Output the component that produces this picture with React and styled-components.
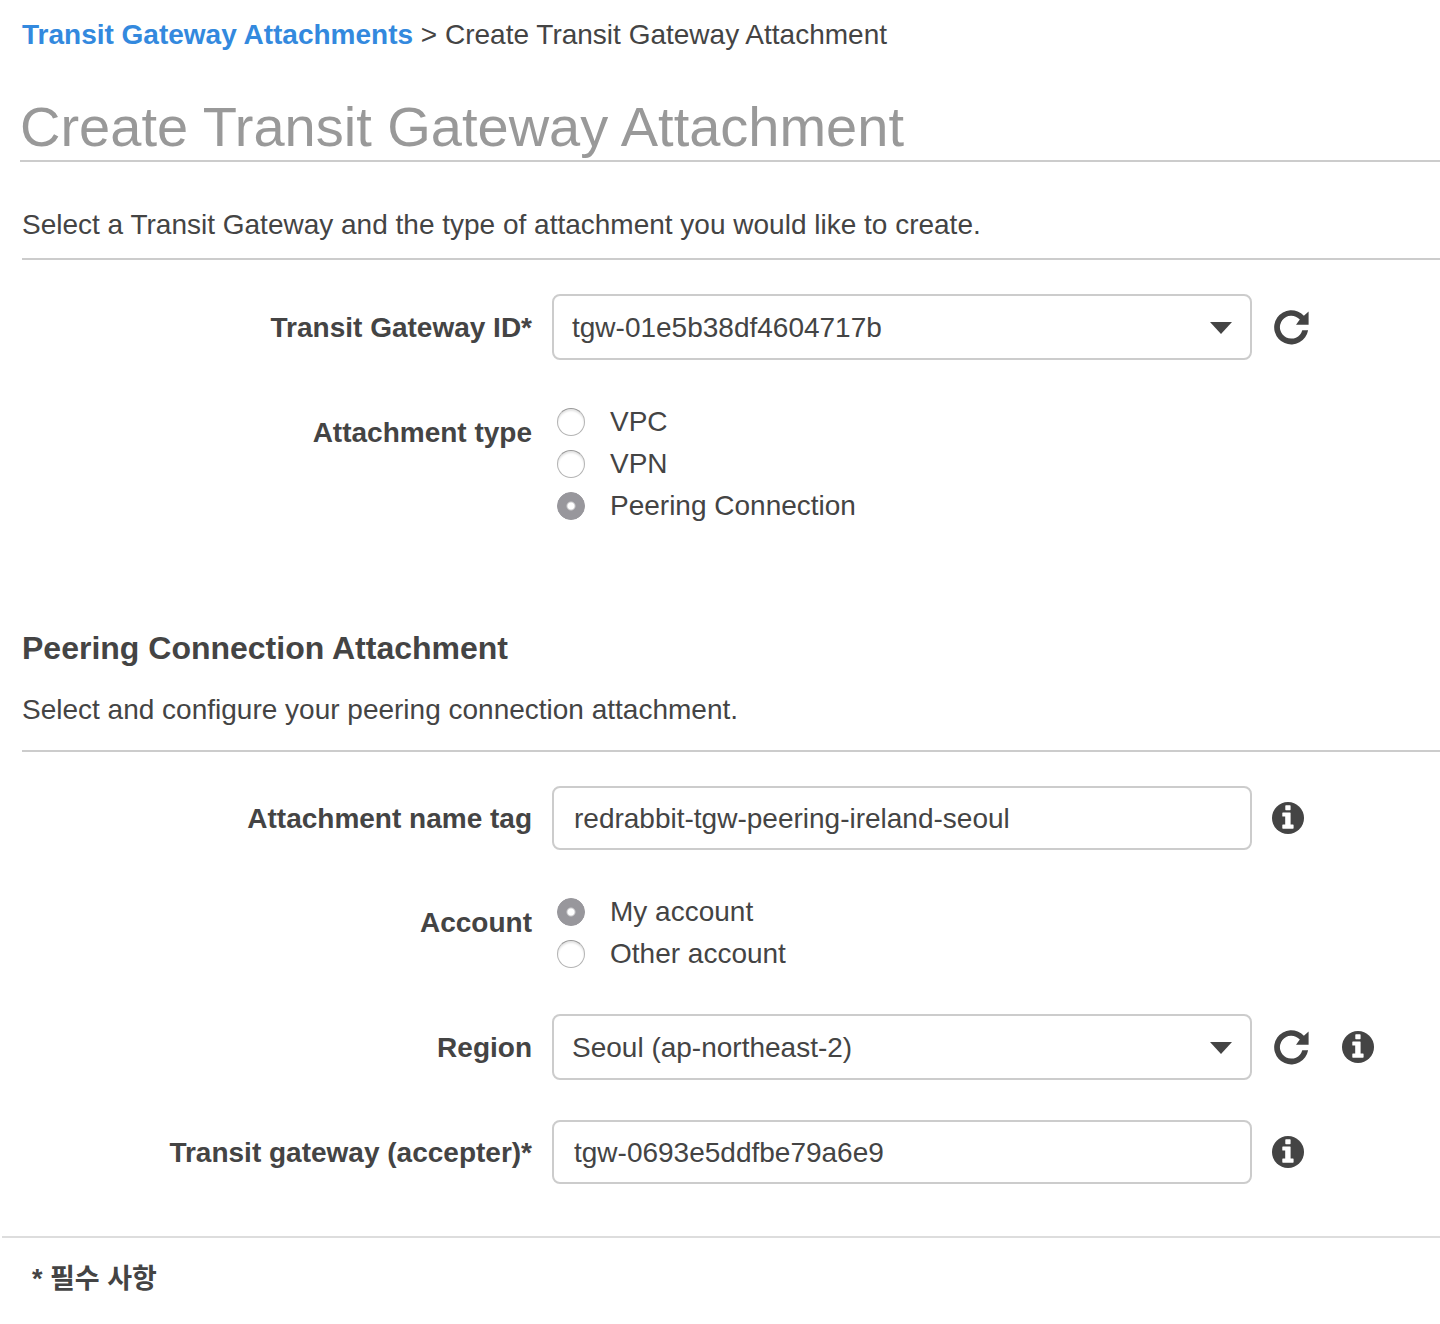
import React, { useState } from "react";
import styled, { createGlobalStyle } from "styled-components";

const GlobalStyle = createGlobalStyle`
  *, *::before, *::after { box-sizing: border-box; }
  body {
    margin: 0;
    background: #fff;
    color: #444;
    font-family: "Liberation Sans", "Noto Sans CJK KR", Arial, sans-serif;
    font-size: 28px;
    line-height: 40px;
    overflow-x: hidden;
  }
`;

const Page = styled.main`
  padding-bottom: 24px;
`;

const Breadcrumb = styled.nav`
  padding: 15px 22px 0;
`;

const BreadcrumbLink = styled.a`
  color: #3389de;
  font-weight: bold;
  text-decoration: none;
`;

const Title = styled.h1`
  margin: 39px 0 0 20px;
  border-bottom: 2px solid #ccc;
  color: #999;
  font-size: 56px;
  font-weight: normal;
  line-height: 66px;
`;

const Section = styled.section`
  margin: ${(p) => p.$top}px 0 0 22px;
`;

const SectionTitle = styled.h2`
  margin: 0 0 22px;
  font-size: 32px;
  line-height: 40px;
`;

const Description = styled.p`
  margin: 0;
  padding-bottom: ${(p) => p.$space}px;
  border-bottom: 2px solid #ccc;
`;

const Fields = styled.div`
  display: flex;
  flex-direction: column;
  gap: 40px;
  padding-top: 34px;
`;

const Row = styled.div`
  display: grid;
  grid-template-columns: 510px minmax(0, 1fr);
  column-gap: 20px;
  align-items: ${(p) => (p.$group ? "start" : "center")};
`;

const Label = styled.label`
  font-weight: bold;
  text-align: right;
  padding-top: ${(p) => (p.$group ? 13 : 2)}px;
`;

const Control = styled.div`
  display: flex;
  align-items: center;
  gap: 20px;
`;

const SelectBox = styled.div`
  position: relative;
  flex: 0 1 700px;
`;

const Caret = styled.svg`
  position: absolute;
  top: 28px;
  right: 20px;
  width: 22px;
  height: 12px;
  fill: #444;
  pointer-events: none;
`;

const Select = styled.select`
  display: block;
  appearance: none;
  width: 100%;
  height: 66px;
  padding: 2px 60px 0 18px;
  border: 2px solid #ccc;
  border-radius: 8px;
  background: #fff;
  color: inherit;
  font: inherit;
`;

const TextInput = styled.input`
  flex: 0 1 700px;
  min-width: 0;
  height: 64px;
  padding: 2px 20px 0;
  border: 2px solid #ccc;
  border-radius: 8px;
  background: #fff;
  color: inherit;
  font: inherit;
`;

const IconButton = styled.button`
  display: flex;
  flex: none;
  padding: 0;
  border: 0;
  background: none;
  color: #444;
  cursor: pointer;

  & + & {
    margin-left: 10px;
  }
`;

const RadioList = styled.div`
  display: flex;
  flex-direction: column;
  padding-left: 5px;
`;

const RadioLabel = styled.label`
  display: flex;
  align-items: center;
  gap: 25px;
  height: 42px;
  padding-top: 2px;
`;

const Radio = styled.input`
  appearance: none;
  flex: none;
  width: 28px;
  height: 28px;
  margin: 0;
  border: 1px solid #b4b4b4;
  border-top-color: #999;
  border-radius: 50%;
  background: #fff;
  box-shadow: inset 0 2px 2px #e4e4e4;

  &:checked {
    border-color: #98979c;
    background: #98979c radial-gradient(circle, #fff 0 3px, #98979c 5px);
    box-shadow: none;
  }
`;

const Footer = styled.footer`
  margin: 52px 0 0 2px;
  padding: 21px 30px 0;
  border-top: 2px solid #ddd;
  font-size: 27px;
  font-weight: bold;
`;

function RefreshButton() {
  return (
    <IconButton type="button" aria-label="Refresh">
      <svg width="40" height="36" viewBox="0 0 40 36" fill="currentColor">
        <path d="M36.1 21.3A17.1 17.1 0 1 1 31.9 6.8L36.6 2.6V15.8H24L27.8 10.6A11.4 11.4 0 1 0 30.3 21.3Z" />
      </svg>
    </IconButton>
  );
}

function InfoButton() {
  return (
    <IconButton type="button" aria-label="Info">
      <svg width="32" height="32" viewBox="0 0 32 32">
        <circle cx="16" cy="16" r="16" fill="currentColor" />
        <path
          fill="#fff"
          d="M13.9 3.3H18a.6.6 0 0 1 .6.6V7.6a.6.6 0 0 1-.6.6H13.9a.6.6 0 0 1-.6-.6V3.9a.6.6 0 0 1 .6-.6ZM10.9 10.5H18a.6.6 0 0 1 .6.6V22.6H21a.6.6 0 0 1 .6.6V26.1a.6.6 0 0 1-.6.6H10.9a.6.6 0 0 1-.6-.6V23.2a.6.6 0 0 1 .6-.6H13.2V14.6H10.9a.6.6 0 0 1-.6-.6V11.1a.6.6 0 0 1 .6-.6Z"
        />
      </svg>
    </IconButton>
  );
}

function SelectField({ id, label, options, info }) {
  return (
    <Row>
      <Label htmlFor={id}>{label}</Label>
      <Control>
        <SelectBox>
          <Select id={id}>
            {options.map((o) => (
              <option key={o}>{o}</option>
            ))}
          </Select>
          <Caret viewBox="0 0 22 12" aria-hidden="true">
            <path d="M0 0H22L11 12Z" />
          </Caret>
        </SelectBox>
        <RefreshButton />
        {info && <InfoButton />}
      </Control>
    </Row>
  );
}

function TextField({ id, label, value }) {
  return (
    <Row>
      <Label htmlFor={id}>{label}</Label>
      <Control>
        <TextInput id={id} type="text" defaultValue={value} />
        <InfoButton />
      </Control>
    </Row>
  );
}

function RadioField({ name, label, options, initial }) {
  const [value, setValue] = useState(initial);
  return (
    <Row $group role="radiogroup" aria-labelledby={`${name}-label`}>
      <Label as="span" $group id={`${name}-label`}>
        {label}
      </Label>
      <RadioList>
        {options.map((o) => (
          <RadioLabel key={o}>
            <Radio
              type="radio"
              name={name}
              checked={value === o}
              onChange={() => setValue(o)}
            />
            {o}
          </RadioLabel>
        ))}
      </RadioList>
    </Row>
  );
}

export default function App() {
  return (
    <>
      <GlobalStyle />
      <Page>
        <Breadcrumb>
          <BreadcrumbLink href="#attachments">Transit Gateway Attachments</BreadcrumbLink>
          {" > Create Transit Gateway Attachment"}
        </Breadcrumb>
        <Title>Create Transit Gateway Attachment</Title>

        <Section $top={43}>
          <Description $space={13}>
            Select a Transit Gateway and the type of attachment you would like to create.
          </Description>
          <Fields>
            <SelectField id="tgw-id" label="Transit Gateway ID*" options={["tgw-01e5b38df4604717b"]} />
            <RadioField
              name="attachment-type"
              label="Attachment type"
              options={["VPC", "VPN", "Peering Connection"]}
              initial="Peering Connection"
            />
          </Fields>
        </Section>

        <Section $top={102}>
          <SectionTitle>Peering Connection Attachment</SectionTitle>
          <Description $space={20}>Select and configure your peering connection attachment.</Description>
          <Fields>
            <TextField id="name-tag" label="Attachment name tag" value="redrabbit-tgw-peering-ireland-seoul" />
            <RadioField
              name="account"
              label="Account"
              options={["My account", "Other account"]}
              initial="My account"
            />
            <SelectField id="region" label="Region" options={["Seoul (ap-northeast-2)"]} info />
            <TextField id="accepter" label="Transit gateway (accepter)*" value="tgw-0693e5ddfbe79a6e9" />
          </Fields>
        </Section>

        <Footer>* 필수 사항</Footer>
      </Page>
    </>
  );
}
